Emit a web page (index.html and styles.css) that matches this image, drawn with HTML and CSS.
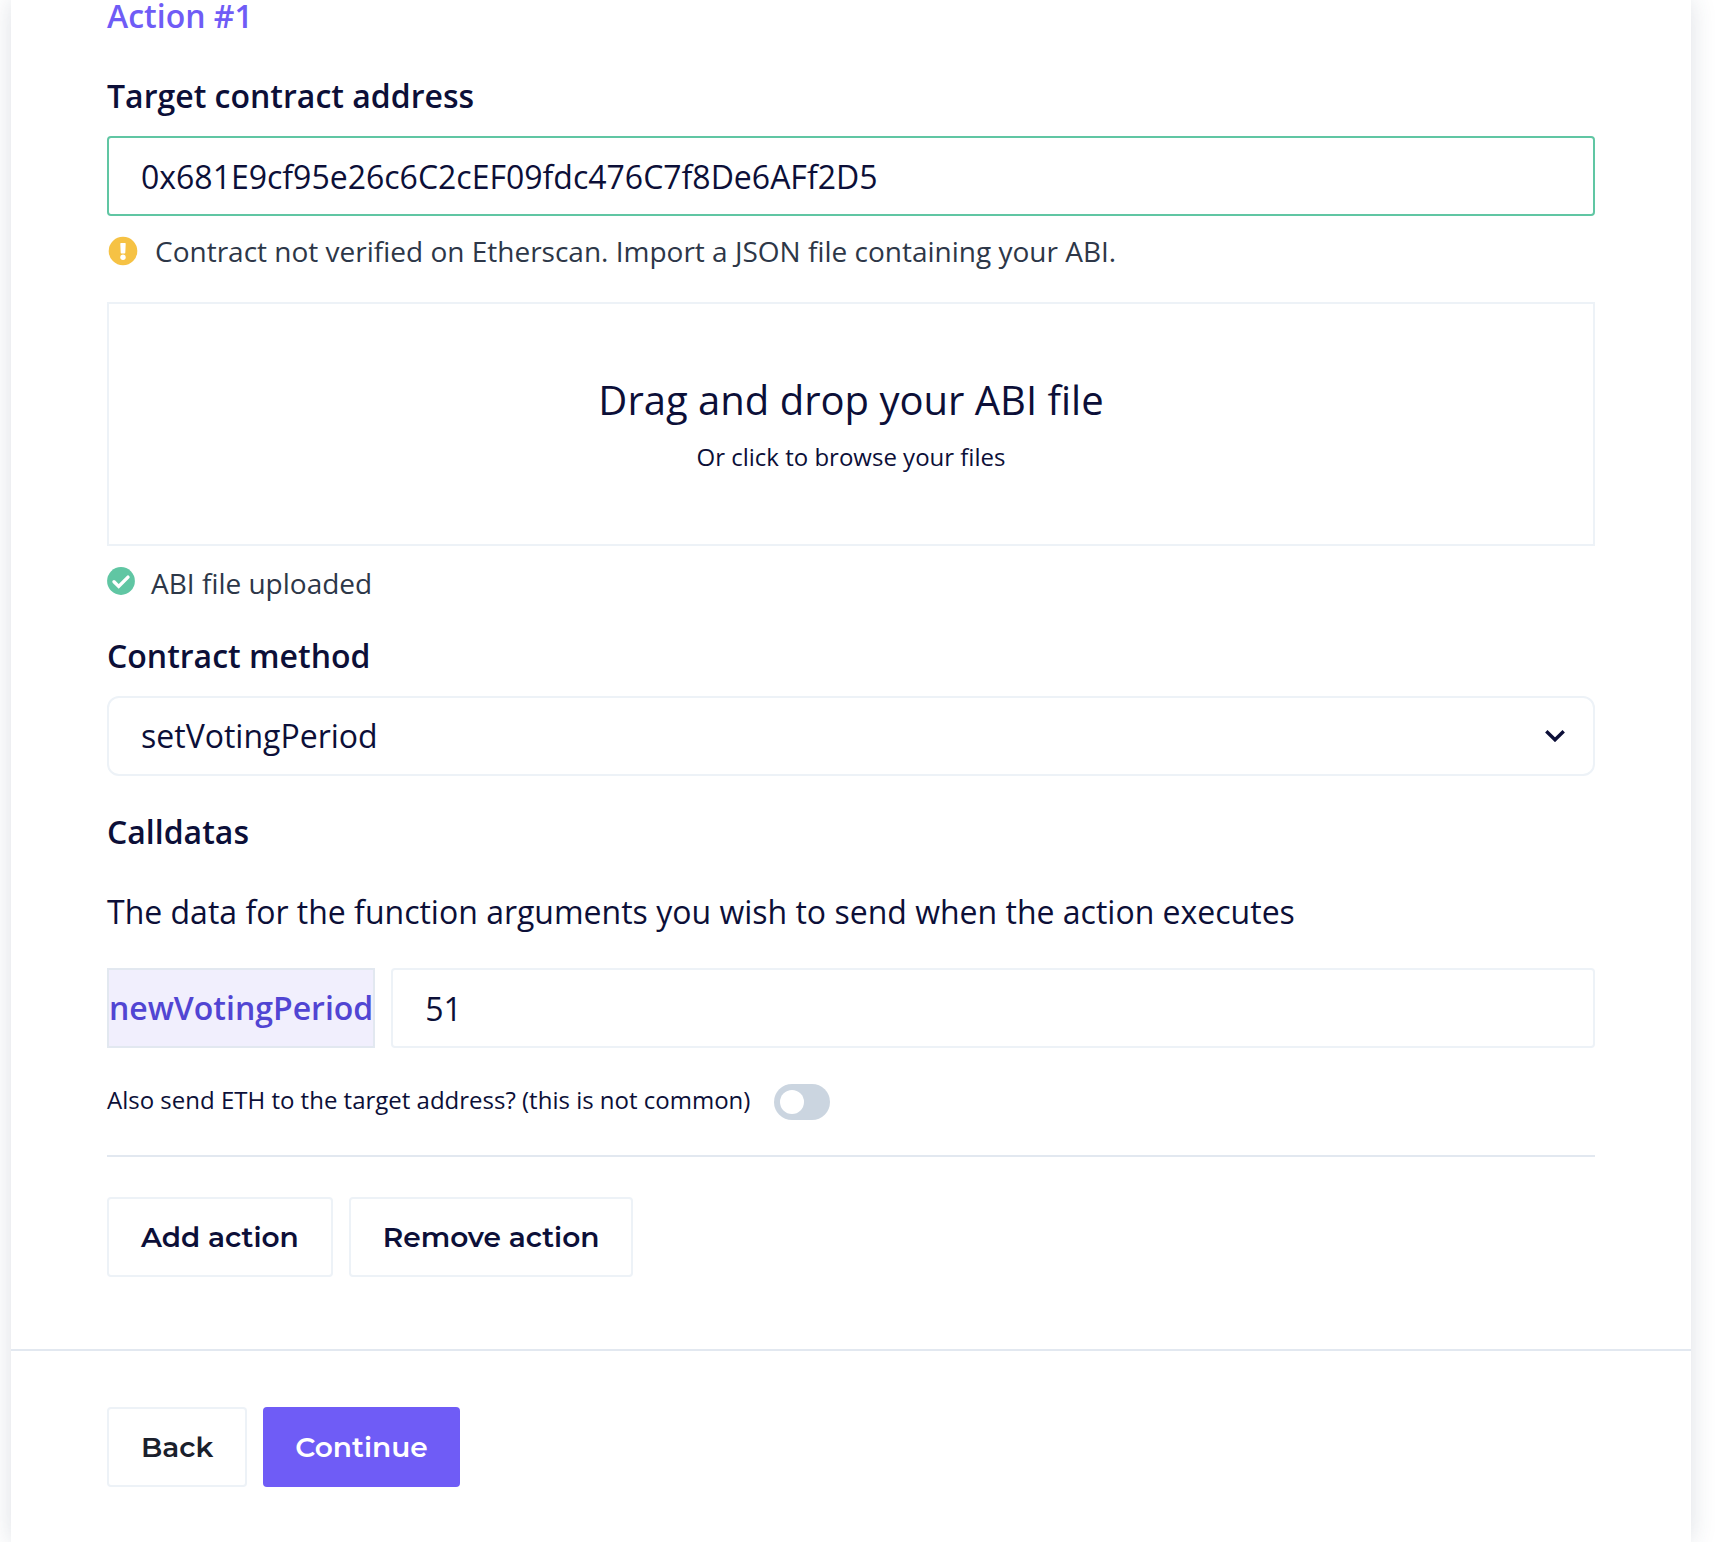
FILE: index.html
```html
<!DOCTYPE html>
<html lang="en">
<head>
<meta charset="utf-8">
<title>Proposal actions</title>
<meta name="viewport" content="width=device-width, initial-scale=1">
<link rel="stylesheet" href="styles.css">
</head>
<body>
<main class="card">
  <form>
    <section class="card-body">
      <h2 class="action-title">Action #1</h2>

      <label class="label" for="target">Target contract address</label>
      <input class="input input-valid" id="target" type="text" value="0x681E9cf95e26c6C2cEF09fdc476C7f8De6AFf2D5">
      <p class="status status-warning">
        <svg width="32" height="32" viewBox="0 0 32 32" aria-hidden="true">
          <circle cx="16" cy="16" r="14.3" fill="#f6c244"/>
          <path d="M14 8.600h4l-.4 9.200h-3.200z" fill="#fff" stroke="#fff" stroke-width="1.400" stroke-linejoin="round"/>
          <circle cx="16" cy="22.200" r="2.700" fill="#fff"/>
        </svg>
        <span>Contract not verified on Etherscan. Import a JSON file containing your ABI.</span>
      </p>

      <label class="dropzone">
        <input class="visually-hidden" type="file" accept=".json">
        <span class="dropzone-title">Drag and drop your ABI file</span>
        <span class="dropzone-hint">Or click to browse your files</span>
      </label>
      <p class="status status-success">
        <svg width="28" height="32" viewBox="0 0 28 32" aria-hidden="true">
          <circle cx="14" cy="14" r="13.9" fill="#60c6a3"/>
          <path d="M7 14.8l4.7 4.6 9.3-9.3" fill="none" stroke="#fff" stroke-width="3.4" stroke-linecap="round"/>
        </svg>
        <span>ABI file uploaded</span>
      </p>

      <label class="label" for="method">Contract method</label>
      <div class="select-wrap">
        <select class="input select" id="method">
          <option>setVotingPeriod</option>
        </select>
        <svg class="chevron" width="20" height="12" viewBox="0 0 20 12" aria-hidden="true">
          <path d="M1.300 1.300L10 9.800l8.700-8.500" fill="none" stroke="#0c0f38" stroke-width="3.400"/>
        </svg>
      </div>

      <h3 class="label calldatas">Calldatas</h3>
      <p class="description">The data for the function arguments you wish to send when the action executes</p>
      <div class="argument">
        <label class="argument-name" for="period">newVotingPeriod</label>
        <input class="input" id="period" type="text" value="51">
      </div>

      <div class="send-eth">
        <label for="eth">Also send ETH to the target address? (this is not common)</label>
        <input class="toggle" id="eth" type="checkbox" role="switch">
      </div>

      <hr class="rule">
      <div class="buttons">
        <button class="button" type="button">Add action</button>
        <button class="button" type="button">Remove action</button>
      </div>
    </section>
    <footer class="card-footer buttons">
      <button class="button button-back" type="button">Back</button>
      <button class="button button-primary" type="submit">Continue</button>
    </footer>
  </form>
</main>
</body>
</html>
```
FILE: styles.css
```css
*, *::before, *::after {
  box-sizing: border-box;
}

body {
  margin: 0;
  background: #fff;
  color: #0c0f38;
  font-family: "Open Sans", "Noto Sans", sans-serif;
  font-size: 32px;
  line-height: 48px;
}

h2, h3, p {
  margin: 0;
}

.card {
  margin: 0 31px 0 11px;
  background: #fff;
  box-shadow: 0 0 24px rgba(45, 65, 92, 0.16);
}

.card-body {
  padding: 0 96px 72px;
}

.action-title {
  margin-bottom: 40px;
  color: #6f5cf6;
  font-size: 32px;
  font-weight: 600;
  line-height: 32px;
}

.label {
  display: block;
  margin-bottom: 16px;
  font-size: 32px;
  font-weight: 600;
}

.input {
  display: block;
  width: 100%;
  height: 80px;
  padding: 0 32px;
  border: 2px solid #edf2f7;
  border-radius: 4px;
  background: #fff;
  color: inherit;
  font: inherit;
}

.input-valid {
  border-color: #60c6a3;
}

.status {
  display: flex;
  align-items: center;
  gap: 16px;
  color: #2d3748;
  font-size: 28px;
  line-height: 42px;
}

.status svg {
  flex: none;
}

.status-warning {
  margin: 14px 0 30px;
}

.status-success {
  margin: 16px 0 28px;
}

.dropzone {
  display: flex;
  flex-direction: column;
  align-items: center;
  gap: 8px;
  padding: 64px 32px 70px;
  border: 2px solid #edf2f7;
  position: relative;
}

.dropzone-title {
  font-size: 40px;
  line-height: 64px;
}

.dropzone-hint {
  font-size: 24px;
  line-height: 34px;
}

.visually-hidden {
  position: absolute;
  width: 1px;
  height: 1px;
  overflow: hidden;
  clip-path: inset(50%);
}

.select-wrap {
  display: grid;
  align-items: center;
}

.select-wrap > * {
  grid-area: 1 / 1;
}

.select {
  appearance: none;
  border-radius: 12px;
}

.chevron {
  justify-self: end;
  margin-right: 30px;
  pointer-events: none;
}

.calldatas {
  margin: 32px 0;
}

.argument {
  display: flex;
  gap: 16px;
  margin: 32px 0 36px;
}

.argument-name {
  display: flex;
  align-items: center;
  justify-content: center;
  flex: none;
  border: 2px solid #e2e8f0;
  background: #f1effd;
  color: #5145d3;
  font-weight: 600;
}

.send-eth {
  display: flex;
  align-items: flex-start;
  gap: 24px;
  font-size: 24px;
  line-height: 32px;
}

.toggle {
  appearance: none;
  flex: none;
  width: 56px;
  height: 36px;
  margin: 0;
  padding: 6px;
  border-radius: 18px;
  background: #cbd5e0;
}

.toggle::before {
  content: "";
  display: block;
  width: 24px;
  height: 24px;
  border-radius: 50%;
  background: #fff;
}

.toggle:checked {
  background: #6f5cf6;
}

.toggle:checked::before {
  margin-left: 20px;
}

.rule {
  height: 2px;
  margin: 35px 0 40px;
  border: 0;
  background: #e2e8f0;
}

.buttons {
  display: flex;
  gap: 16px;
}

.button {
  height: 80px;
  padding: 0 32px;
  border: 2px solid #edf2f7;
  border-radius: 4px;
  background: #fff;
  color: #0c0f38;
  font-family: Montserrat, Inter, sans-serif;
  font-size: 28px;
  font-weight: 600;
}

.button-back {
  color: #1a202c;
}

.button-primary {
  border: 0;
  background: #6f5cf6;
  color: #fff;
}

.card-footer {
  padding: 56px 96px 55px;
  border-top: 2px solid #e2e8f0;
}
```
